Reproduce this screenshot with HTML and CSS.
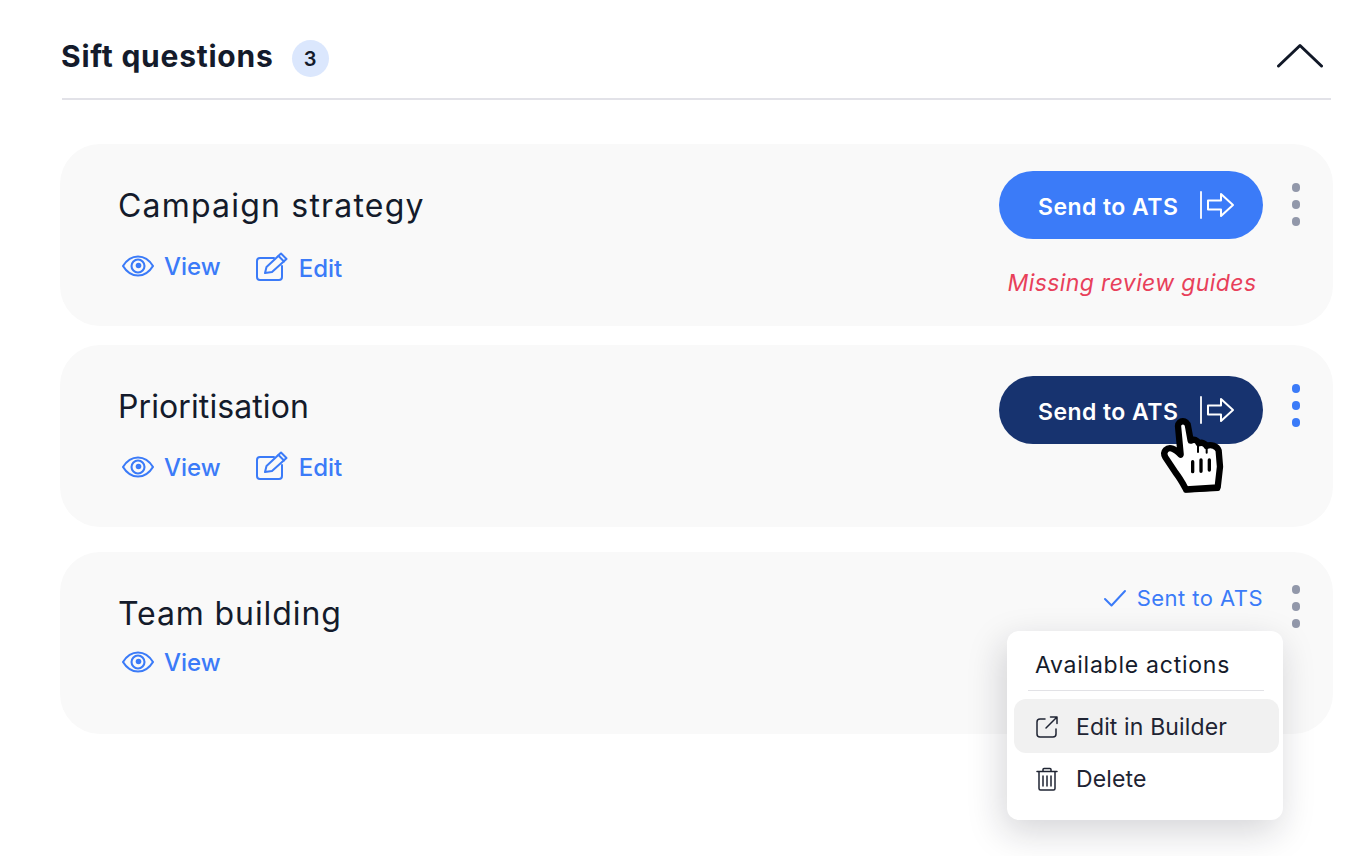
FILE: index.html
```html
<!DOCTYPE html>
<html lang="en">
<head>
<meta charset="utf-8">
<title>Sift questions</title>
<link rel="stylesheet" href="styles.css">
</head>
<body>
<main class="panel">
  <header class="panel-head">
    <h1 class="panel-title">Sift questions</h1>
    <span class="badge">3</span>
    <svg class="chevron" width="48" height="26" viewBox="0 0 48 26"><path d="M3.500 23 25 2.500 46.500 23" fill="none" stroke="#111827" stroke-width="3" stroke-linecap="round" stroke-linejoin="round"/></svg>
  </header>

  <section class="card">
    <div class="card-main">
      <h2 class="card-title title-campaign">Campaign strategy</h2>
      <div class="links">
        <a class="link"><svg class="i-eye" width="34" height="24" viewBox="0 0 34 24"><use href="#eye"/></svg>View</a>
        <a class="link link-edit link-low"><svg class="i-edit" width="34" height="30" viewBox="0 0 34 30"><use href="#edit"/></svg>Edit</a>
      </div>
    </div>
    <div class="actions">
      <button class="send"><span>Send to ATS</span><svg width="36" height="28" viewBox="0 0 36 28"><use href="#send"/></svg></button>
      <p class="missing">Missing review guides</p>
    </div>
    <div class="kebab"><i></i><i></i><i></i></div>
  </section>

  <section class="card card-hover">
    <div class="card-main">
      <h2 class="card-title title-prior">Prioritisation</h2>
      <div class="links">
        <a class="link"><svg class="i-eye" width="34" height="24" viewBox="0 0 34 24"><use href="#eye"/></svg>View</a>
        <a class="link link-edit"><svg class="i-edit" width="34" height="30" viewBox="0 0 34 30"><use href="#edit"/></svg>Edit</a>
      </div>
    </div>
    <div class="actions">
      <button class="send"><span>Send to ATS</span><svg width="36" height="28" viewBox="0 0 36 28"><use href="#send"/></svg></button>
    </div>
    <div class="kebab"><i></i><i></i><i></i></div>
    <svg class="cursor" width="85" height="90" viewBox="0 0 255 270">
      <path d="M84 48C84 30 112 28 114 48L122 92C132 86 142 90 146 100 156 96 166 100 170 108 182 102 202 108 206 122L210 170 203 232 108 238C98 220 90 205 78 190L46 142C36 124 52 110 68 116 78 120 84 126 92 134Z" fill="#fff" stroke="#000" stroke-width="19" stroke-linejoin="round"/>
      <path d="M106 242 204 237" fill="none" stroke="#000" stroke-width="12" stroke-linecap="round"/>
      <path d="M128 155v30M153 150v34M178 150v30" fill="none" stroke="#000" stroke-width="10" stroke-linecap="round"/>
      <path d="M144 100v26M170 108v20" fill="none" stroke="#000" stroke-width="6" stroke-linecap="round"/>
    </svg>
  </section>

  <section class="card card-sent">
    <div class="card-main">
      <h2 class="card-title title-team">Team building</h2>
      <div class="links">
        <a class="link"><svg class="i-eye" width="34" height="24" viewBox="0 0 34 24"><use href="#eye"/></svg>View</a>
      </div>
    </div>
    <div class="actions">
      <div class="sent"><svg width="24" height="18" viewBox="0 0 24 18"><path d="M2 10l6.500 6.500L22 2" fill="none" stroke="#3b7bf8" stroke-width="2" stroke-linecap="round" stroke-linejoin="round"/></svg><span>Sent to ATS</span></div>
    </div>
    <div class="kebab"><i></i><i></i><i></i></div>
    <div class="menu">
      <div class="menu-title">Available actions</div>
      <div class="menu-item menu-item-on">
        <svg width="24" height="24" viewBox="0 0 24 24" fill="none" stroke="#1f2433" stroke-width="1.500" stroke-linecap="round" stroke-linejoin="round"><path d="M10 4H5a3 3 0 0 0-3 3v12a3 3 0 0 0 3 3h13a3 3 0 0 0 3-3v-5M11 13 22 2M15.500 2H22v6.500"/></svg>
        <span>Edit in Builder</span>
      </div>
      <div class="menu-item">
        <svg width="24" height="24" viewBox="0 0 24 24" fill="none" stroke="#1f2433" stroke-width="1.500" stroke-linecap="round" stroke-linejoin="round"><path d="M2 4.500h20M8 4.500V2.500a1 1 0 0 1 1-1h6a1 1 0 0 1 1 1v2M4 4.500v17a1.500 1.500 0 0 0 1.500 1.500h13a1.500 1.500 0 0 0 1.500-1.500v-17M8 9v10M12 9v10M16 9v10"/></svg>
        <span>Delete</span>
      </div>
    </div>
  </section>
</main>

<svg class="defs" width="0" height="0">
  <defs>
    <g id="eye" fill="none" stroke="#3b7bf8" stroke-width="2.100" stroke-linejoin="round">
      <path d="M2 12C6 5.500 11 2.500 17 2.500S28 5.500 32 12c-4 6.500-9 9.500-15 9.500S6 18.500 2 12Z"/>
      <circle cx="17" cy="12" r="6.500"/>
      <circle cx="17.500" cy="11.500" r="2.800" fill="#3b7bf8" stroke="none"/>
    </g>
    <g id="edit" fill="none" stroke="#3b7bf8" stroke-width="2" stroke-linecap="round" stroke-linejoin="round">
      <path d="M19 6H5a3 3 0 0 0-3 3v16a3 3 0 0 0 3 3h19a3 3 0 0 0 3-3V14"/>
      <path d="M10 21l1.500-6L26 1.500 31.500 7 17 20Z"/>
      <path d="M23.500 4l5.500 5.500"/>
    </g>
    <g id="send" fill="none" stroke="#fff" stroke-linejoin="round" stroke-linecap="round">
      <path d="M2 1v26" stroke-width="1.800"/>
      <path d="M9 9.500h13V3l12 11-12 11v-6.500H9Z" stroke-width="2"/>
    </g>
  </defs>
</svg>
</body>
</html>
```
FILE: styles.css
```css
* { box-sizing: border-box; }
html, body { margin: 0; padding: 0; background: #fff; }
body { font-family: Inter, "Noto Sans", sans-serif; color: #141b2b; height: 856px; overflow: hidden; }
.defs { position: absolute; }

.panel { width: 1333px; padding-left: 60px; }

.panel-head {
  height: 100px;
  margin: 0 2px;
  padding: 0 8px 0 0;
  border-bottom: 2px solid #e2e2e8;
  display: flex;
  align-items: flex-start;
}
.panel-title { margin: 38px 0 0 -1px; font-size: 30px; line-height: 36px; font-weight: 700; letter-spacing: 0.76px; color: #141b2b; }
.badge {
  width: 37px; height: 37px; margin: 40px 0 0 18px;
  border-radius: 50%; background: #dbe7fd;
  display: flex; align-items: center; justify-content: center;
  font-size: 20px; font-weight: 600;
}
.chevron { margin: 43px 0 0 auto; }

.card {
  position: relative;
  height: 182px;
  margin-top: 19px;
  padding: 0 33px 0 58px;
  border-radius: 40px;
  background: #f9f9f9;
  display: flex;
  align-items: flex-start;
}
.card:first-of-type { margin-top: 44px; }
.card-sent { margin-top: 25px; }

.card-main { flex: 1; padding-top: 44px; }
.card-title { margin: 0; font-size: 32px; line-height: 36px; font-weight: 400; color: #141b2b; }
.title-campaign { letter-spacing: 1.2px; }
.title-prior { letter-spacing: 0.1px; }
.title-team { letter-spacing: 0.9px; }

.links { margin-top: 27px; height: 30px; display: flex; align-items: center; gap: 34px; }
.card-sent .links { margin-top: 15px; }
.link { display: flex; align-items: center; gap: 9px; font-size: 24px; font-weight: 500; color: #3b7bf8; }
.link-edit { gap: 10px; }
.link-low { margin-top: 4px; }
.i-eye { margin-left: 3px; }
.i-edit { margin-top: -2px; }

.actions { width: 264px; margin-top: 27px; }
.card-hover .actions { margin-top: 31px; }
.card-sent .actions { margin-top: 34px; }

.send {
  width: 264px; height: 68px;
  padding: 0 28px 0 39px;
  border: 0; border-radius: 34px;
  background: #3b7bf8; color: #fff;
  font: 600 23px/1 Inter, sans-serif;
  letter-spacing: 0.45px;
  display: flex; align-items: center; justify-content: space-between;
}
.send span { padding-top: 4px; }
.card-hover .send { background: #17336f; }

.missing { margin: 32px 0 0; padding-left: 2px; text-align: center; font-size: 23px; line-height: 24px; font-style: italic; letter-spacing: 0.38px; color: #e8405a; }

.sent { height: 24px; display: flex; align-items: center; justify-content: flex-end; gap: 10px; font-size: 22px; letter-spacing: 0.45px; color: #3b7bf8; }

.kebab { width: 8.500px; margin: 39px 0 0 28.500px; display: flex; flex-direction: column; gap: 8.500px; }
.kebab i { display: block; width: 8.500px; height: 8.500px; border-radius: 50%; background: #9298aa; }
.card-hover .kebab i { background: #3b7bf8; }
.card-sent .kebab { margin-top: 33px; }

.cursor { position: absolute; left: 1090px; top: 65px; }

.menu {
  position: absolute; left: 947px; top: 79px;
  width: 276px; height: 189px;
  padding: 0 4px 0 7px;
  border-radius: 12px;
  background: #fff;
  box-shadow: -4px 12px 36px rgba(20, 24, 40, 0.18);
}
.menu-title {
  height: 60px;
  margin: 0 15px 8px 14px;
  padding: 19px 0 0 7px;
  border-bottom: 1px solid #e2e2e6;
  font-size: 23px; line-height: 30px; letter-spacing: 0.75px; color: #141b2b;
}
.menu-item { height: 51px; padding-left: 21px; display: flex; align-items: center; gap: 17px; font-size: 23px; letter-spacing: 0.13px; color: #1f2433; border-radius: 12px; }
.menu-item-on { height: 54px; padding-top: 1px; background: #f1f1f1; }
```
